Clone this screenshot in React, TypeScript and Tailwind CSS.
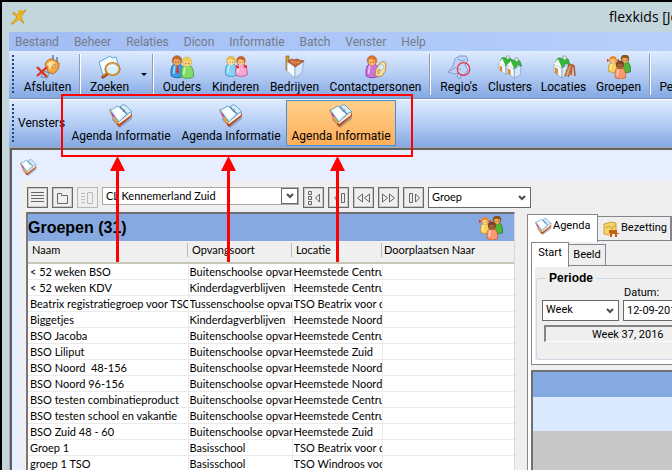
import type { ReactNode } from "react";

const ui = "font-['Roboto','Noto_Sans',sans-serif]";
const classic = "font-['Lato',Arial,sans-serif]";

function BookIcon({ className = "size-6" }: { className?: string }) {
  return (
    <svg viewBox="0 0 24 24" className={className} aria-hidden="true">
      <path d="M3 13 10 22 23 12 23 15 11 24 3 16Z" fill="#5d6f9c" opacity=".45" />
      <path d="M0 6 8 21 10 23 23 12 23 9 9 17Z" fill="#b4511f" />
      <path d="M0 6 2 5 9 17 8 21Z" fill="#e8a53c" />
      <path d="M2 9 4 13 6 13 4 8Z" fill="#e024c0" />
      <path d="M9 18 22 9 22 11 10 20Z" fill="#f7f4ec" />
      <path d="M1 6Q5 5 8 2Q10 3 11 3Q13 0 16 1L23 8Q20 8 18 10 14 14 10 18 7 14 1 6Z" fill="#d5eefc" stroke="#4d94c8" strokeWidth=".8" />
      <path d="M3 6Q6 5 9 3L16 10Q12 12 10 16Z" fill="#fbfeff" />
      <path d="m11 3 7 7" stroke="#4c87ad" strokeWidth="1.2" />
      <path d="M11 4q2-1 2 1t2 1-1 2" fill="none" stroke="#788a99" strokeWidth="1" />
    </svg>
  );
}

function ExitIcon() {
  return (
    <svg viewBox="0 0 24 24" className="size-6" aria-hidden="true">
      <path d="M17 5V0M21 7V2M16 5l6 3" stroke="#6784b5" strokeWidth="1.6" fill="none" />
      <path d="M9 9Q12 3 17 4L23 8Q24 15 17 19L12 17Z" fill="#f2a644" stroke="#a65b18" strokeWidth=".8" />
      <path d="M11 9q4-5 9-1-4 1-6 7Z" fill="#ffe099" />
      <circle cx="18" cy="11" r="1.4" fill="#fff3c6" stroke="#9c5e20" strokeWidth=".6" />
      <path d="M8 16 13 18 11 23 5 22Z" fill="#b8c8df" stroke="#637ba6" strokeWidth=".8" />
      <path d="m1 12 10 10M11 12 1 21" stroke="#df321b" strokeWidth="2.3" />
    </svg>
  );
}

function SearchIcon() {
  return (
    <svg viewBox="0 0 24 24" className="size-6" aria-hidden="true">
      <path d="M1 7 12 1 14 3 18 2 22 15 5 20Z" fill="#eafaff" stroke="#4f9fcc" strokeWidth=".9" />
      <path d="m3 8 9-5 5 11-10 4Z" fill="#fff" />
      <path d="m10 18-5 4" stroke="#9a4b13" strokeWidth="3.5" strokeLinecap="round" />
      <path d="m10 17-5 4" stroke="#e08b38" strokeWidth="1.4" />
      <ellipse cx="14.500" cy="14" rx="7" ry="6" fill="#d7f0fb" stroke="#b97827" strokeWidth="2.2" />
      <ellipse cx="14.500" cy="14" rx="6.500" ry="5.600" fill="none" stroke="#f7ce72" strokeWidth=".7" />
      <path d="M11 12q2-2 5-1" stroke="#fff" strokeWidth="1.5" fill="none" />
    </svg>
  );
}

type Figure = { x: number; y: number; s?: number; hair: string; face: string; body: string; edge: string; bows?: boolean };

function Person({ x, y, s = 1, hair, face, body, edge, bows }: Figure) {
  return (
    <g transform={`translate(${x} ${y}) scale(${s})`}>
      <path d="M-5 17Q-6 9-3 7H3Q6 9 6 17 0 20-5 17Z" fill={body} stroke={edge} strokeWidth=".8" />
      <path d="M-2 8-3 15" stroke="#fff" strokeOpacity=".6" strokeWidth="1.5" />
      <circle cy="3.5" r="4.3" fill={hair} stroke={edge} strokeOpacity=".4" strokeWidth=".5" />
      <circle cy="4.8" r="3" fill={face} />
      <path d="M-4 2Q0-3 4 2L2 3-1 2Z" fill={hair} />
      <path d="M-1 4.500v1M1.500 4.500v1" stroke="#6b351b" strokeWidth=".7" />
      {bows && <path d="m-4 4-3-2v4ZM4 4l3-2v4Z" fill="#ee2b25" />}
    </g>
  );
}

function ParentsIcon() {
  return (
    <svg viewBox="0 0 24 24" className="size-6" aria-hidden="true">
      <Person x={7} y={1.5} s={1.15} hair="#c06a2c" face="#f2a85f" body="#3a9ce6" edge="#1d5fa5" />
      <path d="m7 10-1 7 1.500 2L9 17 8 10Z" fill="#d9322a" />
      <Person x={17} y={3} s={1.1} hair="#f4cb4e" face="#fbd07e" body="#83dd65" edge="#43983a" />
    </svg>
  );
}

function ChildrenIcon() {
  return (
    <svg viewBox="0 0 24 24" className="size-6" aria-hidden="true">
      <Person x={7} y={2} s={1.05} hair="#f2bd3b" face="#ffe2a4" body="#83d4f5" edge="#378fc0" />
      <Person x={17} y={2} s={1.05} hair="#c96024" face="#ffc87e" body="#f6a5d4" edge="#b65691" />
      <path d="M12 12h3M20 11l3 1" stroke="#e42d2d" strokeWidth="2.4" />
    </svg>
  );
}

function CompanyIcon() {
  return (
    <svg viewBox="0 0 24 24" className="size-6" aria-hidden="true">
      <path d="M3 1h3v15l-3-1Z" fill="#d29a35" stroke="#925f1c" strokeWidth=".7" />
      <path d="m4 7 8 4v12l-8-7Z" fill="#f4f9ff" stroke="#859ac1" strokeWidth=".6" />
      <path d="m12 11 9-5-2 12-7 5Z" fill="#d3e6fb" stroke="#7893bf" strokeWidth=".6" />
      <path d="M5 6 9 4l2 1 3-1 2 1 5 1-9 6Z" fill="#cb6c35" stroke="#913c1c" strokeWidth=".7" />
      <path d="m8 6 4 2 5-1" stroke="#e79962" strokeWidth="1" fill="none" />
    </svg>
  );
}

function ContactIcon() {
  return (
    <svg viewBox="0 0 24 24" className="size-6" aria-hidden="true">
      <Person x={8} y={1.5} s={1.15} hair="#dc722b" face="#f8b86a" body="#cf72dc" edge="#8a3c9f" />
      <path d="M7 3q5 1 5 5" stroke="#e77b28" strokeWidth="1.4" fill="none" />
      <path d="M15 9Q20 4 22 9 23 16 18 21 14 23 11 20 11 14 15 9Z" fill="#f5dfa0" stroke="#ae833c" strokeWidth=".9" />
      <path d="m16 9 4 2-2 4-4-2Z" fill="#d8f3ff" stroke="#8daab2" strokeWidth=".5" />
      <path d="m13 16 3 2M14 15l3 1M13 18l2 1" stroke="#a77b3e" strokeWidth=".8" />
    </svg>
  );
}

function RegionIcon() {
  return (
    <svg viewBox="0 0 24 24" className="size-6" aria-hidden="true">
      <path d="M12 1h7l2 4-3 5 3 5-4 5-3-1-1 5-3-2 1-4-4 1-6-2 5-6 2-7Z" fill="#c2d4f5" stroke="#8299cc" strokeWidth="1" />
      <path d="m11 4 4 2 3-1M3 16l6-4M11 13l3 2" stroke="#7f98cf" strokeWidth="1" fill="none" />
      <circle cx="16.500" cy="14" r="6.300" fill="none" stroke="#e63245" strokeWidth="1.2" />
    </svg>
  );
}

function House({ x = 0, y = 0, s = 1 }: { x?: number; y?: number; s?: number }) {
  return (
    <g transform={`translate(${x} ${y}) scale(${s})`}>
      <path d="m1 9 8 4v10l-8-6Z" fill="#f5fbff" stroke="#7c9bc1" strokeWidth=".7" />
      <path d="m9 13 7-4v10l-7 4Z" fill="#d3eafb" stroke="#7696c1" strokeWidth=".7" />
      <path d="M5 3 15 4 17 10 13 8 9 13 6 10 2 8Z" fill="#35b83a" stroke="#1f8429" strokeWidth=".7" />
      <path d="m1 9 4-5 4 9Z" fill="#f7fdf5" />
      <path d="M10 4V1h3v4" fill="#f4f4ef" stroke="#739078" strokeWidth=".7" />
      <path d="m2 12 3 2v6l-3-2Z" fill="#dc8c32" />
    </g>
  );
}

function ClustersIcon() {
  return (
    <svg viewBox="0 0 24 24" className="size-6" aria-hidden="true">
      <House s={0.85} />
      <House x={8} y={2} s={0.92} />
    </svg>
  );
}

function LocationsIcon() {
  return (
    <svg viewBox="0 0 24 24" className="size-6" aria-hidden="true">
      <House x={1} />
      <path d="m13 21 4-11h3l-4 12M19 20l1-10 2 1 1 10" fill="none" stroke="#b85b24" strokeWidth="1.6" />
      <path d="m15 14 4 1M14 18l4 1" stroke="#df8a47" strokeWidth="1.4" />
    </svg>
  );
}

function GroupsIcon({ className = "size-6" }: { className?: string }) {
  return (
    <svg viewBox="0 0 24 24" className={className} aria-hidden="true">
      <Person x={18} y={0.5} s={0.95} hair="#8d541b" face="#ecad60" body="#4eb638" edge="#28761f" />
      <Person x={6} y={2} s={0.85} hair="#ed8a28" face="#ffd486" body="#f8d45b" edge="#bd852a" bows />
      <Person x={13} y={6.5} s={0.95} hair="#7a4422" face="#a36636" body="#fa9b71" edge="#c65734" />
    </svg>
  );
}

function OccupancyIcon() {
  return (
    <svg viewBox="0 0 16 16" className="size-4" aria-hidden="true">
      <path d="m1 3 4-1 3-1 5 1v10l-4-1-3 3-5-1Z" fill="#f7d56b" stroke="#c48c22" strokeWidth=".8" />
      <path d="m3 7 3-2 3 3 3-4" stroke="#ae8738" strokeWidth=".8" fill="none" />
      <path d="M6 9h8v3h2v1h-2v3h-2v-3H9v3H7v-4H6Z" fill="#c66017" />
    </svg>
  );
}

function Chevron() {
  return (
    <svg viewBox="0 0 8 6" className="h-[6px] w-2" aria-hidden="true">
      <path d="m1 1 3 3 3-3" fill="none" stroke="#4d4d4d" strokeWidth="2" />
    </svg>
  );
}

function Separator() {
  return <div className="my-[3px] w-[2px] shrink-0 border-l border-[#8f9bb3] bg-white" />;
}

function Grip() {
  return (
    <div className="w-[7px] shrink-0 pt-1 pl-[3px]">
      <div className="h-10 w-[2px] bg-[repeating-linear-gradient(to_bottom,#26437c_0_2px,transparent_2px_4px)]" />
    </div>
  );
}

function ToolButton({ label, icon, width, active }: { label: string; icon: ReactNode; width: string; active?: boolean }) {
  return (
    <button
      type="button"
      className={`flex h-[46px] shrink-0 flex-col items-center border pt-[3px] whitespace-nowrap ${width} ${
        active ? "border-[#3d8fe0] bg-linear-to-b from-[#ffd08a] to-[#ffad57]" : "border-transparent"
      }`}
    >
      {icon}
      <span className="leading-4">{label}</span>
    </button>
  );
}

const barFill = "bg-linear-to-b from-[#deebff] via-[#b5cdf4] to-[#83a8e2]";

function SmallButton({ label, disabled, children }: { label: string; disabled?: boolean; children: ReactNode }) {
  return (
    <button
      type="button"
      aria-label={label}
      disabled={disabled}
      className="flex size-[21px] shrink-0 items-center justify-center border border-[#686868] bg-[#efefef] text-[#666] shadow-[inset_0_0_0_1px_#c9c9c9] disabled:border-[#b8b8b8] disabled:text-[#bcbcbc] disabled:shadow-none"
    >
      <svg viewBox="0 0 17 17" className="size-[17px]" fill="none" stroke="currentColor" strokeWidth="1" aria-hidden="true">
        {children}
      </svg>
    </button>
  );
}

function Picker({ label, value, className, button }: { label: string; value: string; className: string; button?: boolean }) {
  return (
    <div className={`relative shrink-0 border bg-white ${className}`}>
      <select aria-label={label} className="block size-full appearance-none bg-transparent pl-[3px] outline-none">
        <option>{value}</option>
      </select>
      <span
        className={`pointer-events-none absolute inset-y-0 right-0 flex w-[17px] items-center justify-center ${
          button ? "border border-[#686868]" : ""
        }`}
      >
        <Chevron />
      </span>
    </div>
  );
}

const groups: [string, string, string][] = [
  ["< 52 weken BSO", "Buitenschoolse opvang", "Heemstede Centrum"],
  ["< 52 weken KDV", "Kinderdagverblijven", "Heemstede Centrum"],
  ["Beatrix registratiegroep voor TSO", "Tussenschoolse opvang", "TSO Beatrix voor de"],
  ["Biggetjes", "Kinderdagverblijven", "Heemstede Noord"],
  ["BSO Jacoba", "Buitenschoolse opvang", "Heemstede Centrum"],
  ["BSO Liliput", "Buitenschoolse opvang", "Heemstede Zuid"],
  ["BSO Noord  48-156", "Buitenschoolse opvang", "Heemstede Noord"],
  ["BSO Noord 96-156", "Buitenschoolse opvang", "Heemstede Noord"],
  ["BSO testen combinatieproduct", "Buitenschoolse opvang", "Heemstede Centrum"],
  ["BSO testen school en vakantie", "Buitenschoolse opvang", "Heemstede Centrum"],
  ["BSO Zuid 48 - 60", "Buitenschoolse opvang", "Heemstede Zuid"],
  ["Groep 1", "Basisschool", "TSO Beatrix voor de"],
  ["groep 1 TSO", "Basisschool", "TSO Windroos voor"],
];

function GroupsPanel() {
  return (
    <section className="w-[489px] shrink-0 border-t-2 border-r border-l-2 border-t-[#6f7074] border-r-[#d8d8d8] border-l-[#77787c] bg-white">
      <div className="flex h-[27px] items-center justify-between bg-[#87a9e1] pr-[11px]">
        <h2 className="font-['Liberation_Sans',Arial,sans-serif] text-base font-bold">Groepen (31)</h2>
        <GroupsIcon />
      </div>
      <table className="w-full table-fixed border-collapse text-left">
        <colgroup>
          <col className="w-[160px]" />
          <col className="w-[104px]" />
          <col className="w-[90px]" />
          <col />
        </colgroup>
        <thead className="bg-[#efefef]">
          <tr className="h-[22px] border-b-2 border-[#c9c6b5]">
            {["Naam", "Opvangsoort", "Locatie", "Doorplaatsen Naar"].map((name, i) => (
              <th key={name} className={`p-0 pb-[3px] font-normal ${i === 3 ? "" : "pl-1"}`}>
                <div className={`h-[14px] leading-[14px] ${i < 3 ? "border-r border-[#bdb9a6]" : "pl-[2px]"}`}>{name}</div>
              </th>
            ))}
          </tr>
        </thead>
        <tbody>
          {groups.map((row) => (
            <tr key={row[0]} className="h-4 border-b border-[#ebebeb]">
              {row.map((cell, i) => (
                <td key={i} className={`border-r border-[#ebebeb] p-0 ${i === 0 ? "pl-[2px]" : "pl-px"}`}>
                  <div className="overflow-hidden leading-[15px] whitespace-pre">{cell}</div>
                </td>
              ))}
              <td className="p-0" />
            </tr>
          ))}
        </tbody>
      </table>
    </section>
  );
}

function AgendaPanel() {
  return (
    <section className={`min-w-0 flex-1 overflow-hidden pt-[2px] ${ui}`}>
      <div role="tablist" className="flex h-[27px] items-end">
        <button
          type="button"
          role="tab"
          className="relative -mb-px flex h-7 w-[71px] shrink-0 items-center gap-px border border-b-0 border-[#85858f] bg-white pb-1 pl-[7px]"
        >
          <BookIcon className="size-[17px] shrink-0" />
          Agenda
        </button>
        <button
          type="button"
          role="tab"
          className="flex h-[25px] w-[73px] shrink-0 items-center gap-[2px] border border-l-0 border-[#85858f] bg-[#efefef] pl-[5px]"
        >
          <OccupancyIcon />
          Bezetting
        </button>
        <button type="button" role="tab" aria-label="Volgende" className="h-[25px] w-5 shrink-0 border border-[#85858f]" />
      </div>
      <div className="h-full border-l border-[#85858f] bg-white pl-[3px]">
        <div className="bg-[#efefef]">
          <div role="tablist" className="flex h-[25px] items-end">
            <button type="button" role="tab" className="relative -mb-px h-[25px] w-[38px] shrink-0 border border-b-0 border-[#85858f] bg-white pb-1">
              Start
            </button>
            <button type="button" role="tab" className="h-[22px] w-[37px] shrink-0 border border-l-0 border-[#85858f]">
              Beeld
            </button>
            <div className="flex-1 self-stretch border-b border-[#85858f]" />
          </div>
          <div className="border-b border-l border-[#85858f] bg-white pb-1 pl-[3px]">
            <div className="bg-[#efefef] pt-[5px]">
              <fieldset className="ml-px h-[89px] rounded-[3px] border border-r-0 border-[#cfd8e2] pl-[5px]">
                <legend className="ml-1 bg-[#efefef] px-[3px] font-['Liberation_Sans',Arial,sans-serif] text-xs leading-[14px] font-bold">
                  Periode
                </legend>
                <label htmlFor="datum" className="block pt-[2px] pl-[82px] leading-3">
                  Datum:
                </label>
                <div className="mt-px flex gap-1">
                  <Picker label="Periode" value="Week" className="h-[21px] w-[77px] border-[#686868]" />
                  <input
                    id="datum"
                    defaultValue="12-09-2016"
                    className="h-[21px] w-[90px] shrink-0 border border-[#686868] bg-white pl-[3px] outline-none"
                  />
                </div>
                <div className="mt-1 ml-[2px] h-[17px] w-[174px] border-t-2 border-b border-l-2 border-t-[#858585] border-b-white border-l-[#858585] pl-[46px] leading-[15px] whitespace-nowrap">
                  Week 37, 2016
                </div>
              </fieldset>
            </div>
          </div>
          <div className="pt-[5px]">
            <div className="border-t-2 border-l-2 border-[#707070]">
              <div className="h-[25px] bg-[#87a9e1]" />
              <div className="h-[34px] bg-[#dceaff]" />
              <div className="h-60 bg-[#c8c8c8]" />
            </div>
          </div>
        </div>
      </div>
    </section>
  );
}

function Annotations() {
  return (
    <svg className="pointer-events-none absolute -top-[2px] -left-[2px] h-[270px] w-[420px]" viewBox="0 0 420 270" aria-hidden="true">
      <rect x="62" y="95" width="350" height="61" fill="none" stroke="#f00" strokeWidth="2" />
      {[117.5, 228.5, 337.5].map((x) => (
        <g key={x} fill="#f00">
          <rect x={x - 1.5} y="168" width="3" height="94" />
          <path d={`M${x} 156l7.500 15h-15z`} />
        </g>
      ))}
    </svg>
  );
}

export default function App() {
  return (
    <div className={`relative flex h-screen flex-col overflow-hidden border-t-2 border-l-2 border-black bg-[#c3d6dc] text-[12px] text-black ${ui}`}>
      <header className="flex h-[30px] shrink-0 items-center justify-between pl-[9px]">
        <svg viewBox="0 0 16 16" className="size-4" aria-hidden="true">
          <circle cx="9" cy="3" r="2.200" fill="#f3b51b" />
          <path d="M2 3 7 6 14 1 15 1 10 8 13 14 12 14 8 10 2 15 0 15 6 8 2 5Z" fill="#f5b91d" stroke="#ad7f1c" strokeWidth=".6" />
        </svg>
        <h1 className="w-[63px] overflow-hidden font-['Open_Sans','Noto_Sans',sans-serif] text-sm whitespace-nowrap">flexkids [Jong]</h1>
      </header>
      <div className="flex min-h-0 flex-1 flex-col pl-[7px]">
        <nav className="flex h-[19px] shrink-0 items-center gap-[15px] bg-linear-to-r from-[#a1bdf4] to-[#b7d0fb] pl-[6px] leading-4 text-[#747b89]">
          {["Bestand", "Beheer", "Relaties", "Dicon", "Informatie", "Batch", "Venster", "Help"].map((item) => (
            <button key={item} type="button">
              {item}
            </button>
          ))}
        </nav>
        <div className={`flex h-12 shrink-0 overflow-hidden border-b border-[#7790bd] ${barFill}`}>
          <Grip />
          <ToolButton label="Afsluiten" icon={<ExitIcon />} width="w-[63px]" />
          <Separator />
          <ToolButton label="Zoeken" icon={<SearchIcon />} width="ml-[3px] w-[51px]" />
          <button type="button" aria-label="Zoekopties" className="flex w-[17px] shrink-0 items-center justify-center">
            <span className="border-x-[3px] border-t-[3px] border-x-transparent border-t-black" />
          </button>
          <Separator />
          <ToolButton label="Ouders" icon={<ParentsIcon />} width="ml-[3px] w-[50px]" />
          <ToolButton label="Kinderen" icon={<ChildrenIcon />} width="w-[57px]" />
          <ToolButton label="Bedrijven" icon={<CompanyIcon />} width="w-[61px]" />
          <ToolButton label="Contactpersonen" icon={<ContactIcon />} width="w-[101px]" />
          <div className="w-[3px] shrink-0" />
          <Separator />
          <ToolButton label="Regio's" icon={<RegionIcon />} width="ml-[3px] w-[50px]" />
          <ToolButton label="Clusters" icon={<ClustersIcon />} width="w-[52px]" />
          <ToolButton label="Locaties" icon={<LocationsIcon />} width="w-[55px]" />
          <ToolButton label="Groepen" icon={<GroupsIcon />} width="w-[55px]" />
          <div className="w-[3px] shrink-0" />
          <Separator />
          <ToolButton label="Personeel" icon={<div className="size-6" />} width="ml-[3px] w-[64px]" />
        </div>
        <div className={`flex h-12 shrink-0 items-start border-t border-white ${barFill}`}>
          <Grip />
          <span className="w-[50px] shrink-0 pt-[15px] pl-[2px] leading-4">Vensters</span>
          <ToolButton label="Agenda Informatie" icon={<BookIcon />} width="w-[110px]" />
          <ToolButton label="Agenda Informatie" icon={<BookIcon />} width="w-[110px]" />
          <ToolButton label="Agenda Informatie" icon={<BookIcon />} width="w-[110px]" active />
        </div>
        <main className={`flex min-h-0 flex-1 flex-col border-t border-l border-[#a8a8a8] ${classic} text-[11px]`}>
          <div className="flex min-h-0 flex-1 flex-col border-t-2 border-l-2 border-[#606060] bg-[#e7eeff] pl-2">
            <div className="flex h-[30px] shrink-0 items-center pt-1">
              <BookIcon className="size-[17px]" />
            </div>
            <div className="min-h-0 flex-1 bg-[#efefef] pl-[6px]">
              <div className="flex h-8 items-start gap-1 pt-[7px] pl-px">
                <SmallButton label="Lijst">
                  <path d="M2 3.500h13M2 6.500h13M2 9.500h13M2 12.500h13" />
                </SmallButton>
                <SmallButton label="Map">
                  <path d="M3.500 4.500h4v2h6v8h-10z" />
                </SmallButton>
                <SmallButton label="Lijst en map" disabled>
                  <path d="M2 4.500h4M2 7.500h4M2 10.500h4M2 13.500h4M8.500 3.500h5v11h-5z" />
                </SmallButton>
                <Picker label="Locatie" value="CL Kennemerland Zuid" className="h-[18px] w-[197px] border-[#a9a9a9] leading-4" button />
                <SmallButton label="Eerste">
                  <path d="M3.500 2.500h3v3h-3zM3.500 7.500h3v3h-3zM3.500 12.500h3v3h-3zM14.500 5v8l-4-4z" />
                </SmallButton>
                <SmallButton label="Vorige">
                  <path d="M8.500 5v8l-4-4zM11.500 4.500h3v9h-3z" />
                </SmallButton>
                <SmallButton label="Terug">
                  <path d="M7.500 5v8l-5-4zM14.500 5v8l-5-4z" />
                </SmallButton>
                <SmallButton label="Vooruit">
                  <path d="M2.500 5v8l5-4zM9.500 5v8l5-4z" />
                </SmallButton>
                <SmallButton label="Volgende">
                  <path d="M4.500 4.500h3v9h-3zM10.500 5v8l4-4z" />
                </SmallButton>
                <Picker label="Weergave" value="Groep" className="h-[21px] w-[103px] border-[#686868]" />
              </div>
              <div className="flex h-full gap-3">
                <GroupsPanel />
                <AgendaPanel />
              </div>
            </div>
          </div>
        </main>
      </div>
      <Annotations />
    </div>
  );
}
